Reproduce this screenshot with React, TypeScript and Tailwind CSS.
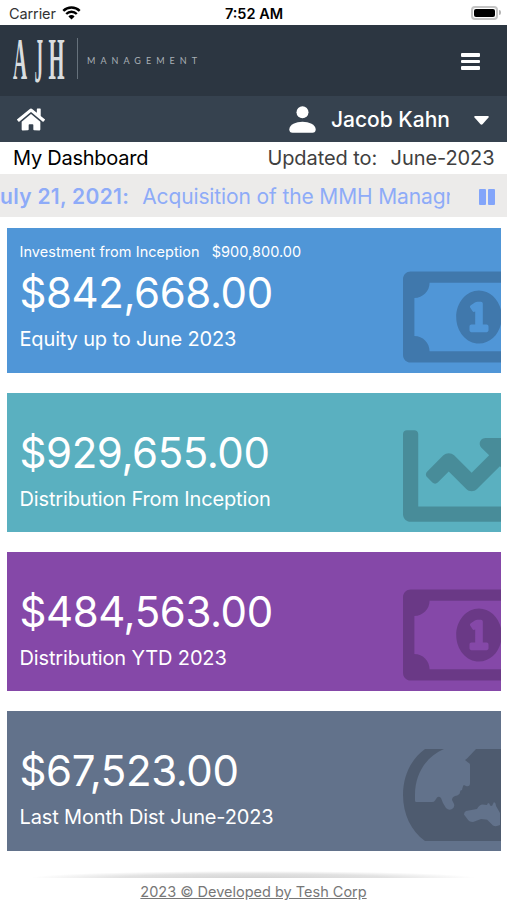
import type { ReactNode } from 'react';
import { FaChartLine, FaHome, FaRegMoneyBillAlt } from 'react-icons/fa';

interface CardProps {
  className: string;
  amount: string;
  label: string;
  note?: ReactNode;
  icon: ReactNode;
}

function StatusBar() {
  return (
    <div className="grid h-[25px] grid-cols-3 items-center bg-white pl-[9px] pr-[6px] text-black">
      <div className="flex items-center gap-[6px] pt-[3px]">
        <span className="text-[14.5px] leading-[20px] tracking-[-0.1px] text-[#333]">Carrier</span>
        <svg className="-mt-[3px] h-[14px] w-[19px]" viewBox="0 0 19 14" fill="none" stroke="black">
          <path d="M1.3 4.9a11.7 11.7 0 0 1 16.4 0" strokeWidth="2.5" />
          <path d="M4.2 8a7.5 7.5 0 0 1 10.6 0" strokeWidth="2.4" />
          <path d="M9.5 13.5 6.4 10.4a4.4 4.4 0 0 1 6.2 0z" fill="black" stroke="none" />
        </svg>
      </div>
      <span className="pr-[2px] pt-[3px] text-center text-[14.5px] leading-[20px] font-semibold">7:52 AM</span>
      <div className="flex items-center justify-end">
        <div className="h-[14px] w-[27px] rounded-[4px] border-2 border-[#c4c4c4] p-px">
          <div className="h-full w-full rounded-[2px] bg-black" />
        </div>
        <div className="ml-px h-[5px] w-[2px] rounded-r-full bg-[#b5b5b5]" />
      </div>
    </div>
  );
}

function Logo() {
  return (
    <svg className="h-[70px] w-[200px] overflow-visible" viewBox="0 -10 200 70" fill="#d9dddf">
      <g fontFamily="Liberation Serif, serif" fontSize="59" fontWeight="700">
        <text transform="translate(0 43) scale(.33 1)">A</text>
        <text transform="translate(21.5 46) scale(.29 1.08)">J</text>
        <text transform="translate(35.5 43) scale(.35 1)">H</text>
      </g>
      <path d="M64.5 2v41" stroke="#66717b" />
      <text x="74" y="28" fontFamily="Lato, sans-serif" fontSize="9" fill="#a9b0b6" textLength="110">
        MANAGEMENT
      </text>
    </svg>
  );
}

function GlobeIcon() {
  return (
    <svg className="h-[92px] w-[98px] shrink-0" viewBox="0 0 98 92" fill="currentColor" fillRule="evenodd">
      <path
        d="M22 0H98V92H22C8 82 0 65 0 46S8 10 22 0z
          M41 0C24 7 12 24 12 46V51.5q0 1.5 1.5 1.5H29q2 0 3-1.5l2-3q2-1.5 4 .5l2 5 3 5q3 3 6 1 3-2 2-5l-2-4q0-3 3-4 5-1 5-4 0-2 2-2 1-5 2-5l2 1q4 1 4-3V15.5q0-1-2-2l-3-2.5 2-1.500L73 0z
          M61 65.5q0-2.500 2-3.500l11-2q2-4 5-4.500l5 .5 1-2q2 0 2 2.500l2 .5 2-4q2 1 2 4l4 7V76q-4 2-7 .5l-5-5q-1-1.500-7-1.500l-8 3q-4 0-6-3.500z"
      />
    </svg>
  );
}

function Card({ className, amount, label, note, icon }: CardProps) {
  return (
    <section className={`relative flex flex-col overflow-hidden pl-[12.5px] text-white ${className}`}>
      {note}
      <p className="text-[42px] leading-[50px] tracking-[-0.42px]">{amount}</p>
      <p className="mt-[8px] text-[20px] leading-[26px] tracking-[-0.15px]">{label}</p>
      <div className="absolute bottom-[10px] left-[396px] flex h-[92px] items-center overflow-hidden text-black/20">
        {icon}
      </div>
    </section>
  );
}

export default function App() {
  return (
    <div className="h-[900px] w-[507px] overflow-hidden bg-white font-['Inter',sans-serif]">
      <StatusBar />

      <header className="flex h-[71px] items-center justify-between bg-[#2c3641] pl-[13px] pr-[27.5px]">
        <Logo />
        <div className="flex flex-col gap-[3px] pt-[2px]">
          <div className="h-[3.5px] w-[19px] rounded-[1px] bg-white" />
          <div className="h-[3.5px] w-[19px] rounded-[1px] bg-white" />
          <div className="h-[3.5px] w-[19px] rounded-[1px] bg-white" />
        </div>
      </header>

      <nav className="flex h-[46px] items-center bg-[#36424f] pl-[17px] pr-[18px] text-white">
        <FaHome className="h-[25px] w-[28px]" />
        <svg className="ml-auto h-[27px] w-[27px]" viewBox="0 0 27 27" fill="currentColor">
          <circle cx="13.5" cy="6.2" r="6" />
          <path d="M.3 23.5C.3 18.6 7 15.8 13.5 15.8s13.2 2.8 13.2 7.7c0 2-1.2 3.3-3.2 3.3h-20C1.5 26.8.3 25.5.3 23.5z" />
        </svg>
        <span className="ml-[15px] pt-px text-[21px] font-medium">Jacob Kahn</span>
        <svg className="ml-[24px] mt-[2px] h-[9px] w-[15px]" viewBox="0 0 15 9" fill="currentColor">
          <path d="M1 0h13q1.2.3.5 1.4L8.5 8.3q-1 .9-2 0L.5 1.4Q-.2.3 1 0z" />
        </svg>
      </nav>

      <div className="flex h-[32px] items-center justify-between pl-[13px] pr-[12.5px] text-[20px] text-black">
        <span className="tracking-[-0.25px]">My Dashboard</span>
        <span className="flex gap-[13.5px] tracking-[-0.08px] text-[#404040]">
          <span>Updated to:</span>
          <span>June-2023</span>
        </span>
      </div>

      <div className="flex h-[43px] items-center justify-between bg-[#ecebea] pr-[12px] text-[21px] text-[#8eabf8]">
        <div className="flex w-[450px] gap-[13px] overflow-hidden pt-[2px] whitespace-nowrap">
          <span className="font-semibold tracking-[0.3px]">uly 21, 2021:</span>
          <span className="tracking-[-0.13px]">Acquisition of the MMH Managr</span>
        </div>
        <div className="flex gap-[2px] pt-[2px]">
          <div className="h-[16px] w-[7px] rounded-[1px] bg-[#83a5fa]" />
          <div className="h-[16px] w-[7px] rounded-[1px] bg-[#83a5fa]" />
        </div>
      </div>

      <main className="flex flex-col gap-[20px] pl-[7px] pr-[6.5px] pt-[11px]">
        <Card
          className="h-[145px] bg-[#5096d7] pt-[14px]"
          note={
            <p className="mb-[6px] flex gap-[12px] text-[14.5px] leading-[20px] tracking-[0.04px]">
              <span>Investment from Inception</span>
              <span>$900,800.00</span>
            </p>
          }
          amount="$842,668.00"
          label="Equity up to June 2023"
          icon={<FaRegMoneyBillAlt className="h-[122px] w-[152px] shrink-0" />}
        />
        <Card
          className="h-[139px] bg-[#5ab0c0] pt-[35px]"
          amount="$929,655.00"
          label="Distribution From Inception"
          icon={<FaChartLine className="h-[122px] w-[122px] shrink-0" />}
        />
        <Card
          className="h-[139px] bg-[#8548a8] pt-[35px]"
          amount="$484,563.00"
          label="Distribution YTD 2023"
          icon={<FaRegMoneyBillAlt className="h-[122px] w-[152px] shrink-0" />}
        />
        <Card
          className="h-[140px] bg-[#62728b] pt-[35px]"
          amount="$67,523.00"
          label="Last Month Dist June-2023"
          icon={<GlobeIcon />}
        />
      </main>

      <footer className="flex flex-col items-center pt-[20px]">
        <div className="h-[7px] w-[445px] bg-[radial-gradient(ellipse_50%_100%_at_50%_100%,#d4d4d4_0%,#e2e2e2_60%,transparent_100%)]" />
        <p className="mt-[4px] text-[14.5px] leading-[20px] text-[#777] underline">
          2023 © Developed by Tesh Corp
        </p>
      </footer>
    </div>
  );
}
